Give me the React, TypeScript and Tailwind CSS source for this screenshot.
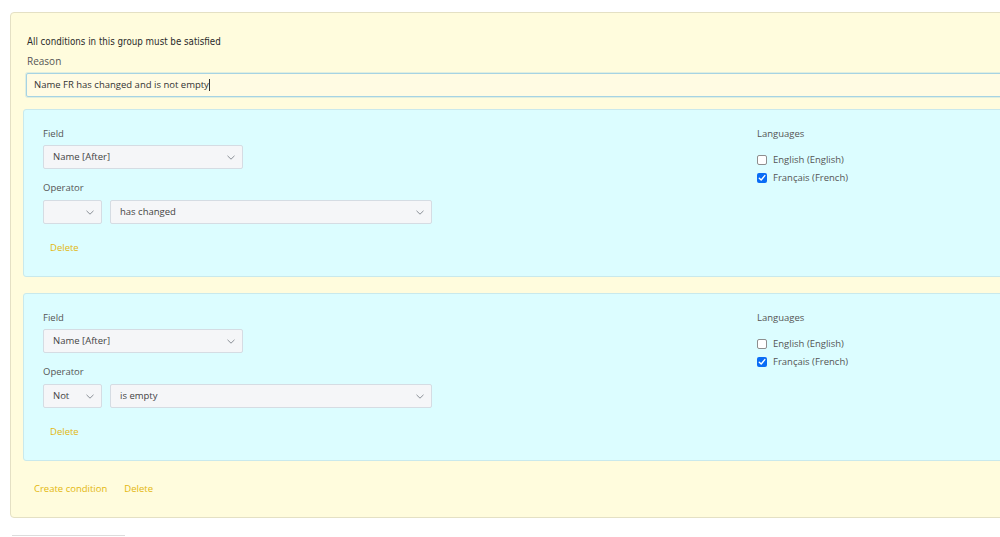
import React from "react";

function Chevron() {
  return (
    <svg width="8" height="5" viewBox="0 0 8 5" className="shrink-0">
      <path d="M0.5 0.8 L4 4.2 L7.5 0.8" fill="none" stroke="#8a8f96" strokeWidth="1" />
    </svg>
  );
}

function Select({ value, w }: { value: string; w: string }) {
  return (
    <div
      className={`${w} h-[24px] flex items-center justify-between pl-[9px] pr-[7px] bg-[#f5f6f8] border border-[#d5dce3] rounded-[2px] text-[9.5px] text-[#444]`}
    >
      <span className="leading-none">{value}</span>
      <Chevron />
    </div>
  );
}

function Checkbox({ checked }: { checked: boolean }) {
  if (checked) {
    return (
      <div className="w-[10px] h-[10px] rounded-[2px] bg-[#0a6cf5] flex items-center justify-center">
        <svg width="8" height="8" viewBox="0 0 8 8">
          <path d="M1.3 4.2 L3.2 6 L6.8 1.6" fill="none" stroke="white" strokeWidth="1.4" strokeLinecap="round" strokeLinejoin="round" />
        </svg>
      </div>
    );
  }
  return <div className="w-[10px] h-[10px] rounded-[2px] bg-white border border-[#8e8e8e]" />;
}

function Condition({ op }: { op: string }) {
  return (
    <div className="w-[1000px] border border-[#c9e9ec] rounded-[3px] bg-[#dcfdff] pl-[19px] pt-[17px] pb-[21px] flex">
      <div className="w-[714px]">
        <div className="leading-[14px]">Field</div>
        <div className="mt-[4px]">
          <Select value="Name [After]" w="w-[200px]" />
        </div>
        <div className="mt-[12px] leading-[14px]">Operator</div>
        <div className="mt-[5px] flex gap-[8px]">
          <Select value={op} w="w-[59px]" />
          <Select value={op ? "is empty" : "has changed"} w="w-[322px]" />
        </div>
        <div className="mt-[17px] ml-[7px] leading-[14px] text-[#e3b70e]">Delete</div>
      </div>
      <div>
        <div className="leading-[14px]">Languages</div>
        <div className="mt-[12px] flex items-center gap-[6px] h-[14px]">
          <Checkbox checked={false} />
          <span>English (English)</span>
        </div>
        <div className="mt-[4px] flex items-center gap-[6px] h-[14px]">
          <Checkbox checked={true} />
          <span>Français (French)</span>
        </div>
      </div>
    </div>
  );
}

export default function App() {
  return (
    <div className="w-[1000px] h-[537px] overflow-hidden bg-white font-['Open_Sans',sans-serif] text-[9.5px] text-[#555]">
      <div className="ml-[10px] mt-[12px] w-[1020px] h-[506px] rounded-[4px] border border-[#e4e0c4] bg-[#fffcdd] pl-[12px] pt-[22px]">
        <div className="ml-[4px] leading-[14px] text-[9.7px] font-medium text-[#2a2a2a] font-['DejaVu_Sans',sans-serif] [font-stretch:condensed]">
          All conditions in this group must be satisfied
        </div>
        <div className="ml-[4px] mt-[5px] leading-[14px] text-[10px]">Reason</div>
        <div className="ml-[3px] mt-[5px] h-[24px] w-[1000px] border border-[#a6d3e3] rounded-[2px] bg-[#fffbe3] shadow-[0_0_0_1px_rgba(166,211,227,0.35)] flex items-center pl-[7px] text-[9.5px] text-[#333]">
          <span>Name FR has changed and is not empty</span>
          <span className="w-px h-[12px] bg-[#333]" />
        </div>
        <div className="mt-[12px]">
          <Condition op="" />
        </div>
        <div className="mt-[16px]">
          <Condition op="Not" />
        </div>
        <div className="mt-[21px] ml-[11px] flex gap-[17px] leading-[14px] text-[#e3b70e]">
          <span>Create condition</span>
          <span>Delete</span>
        </div>
      </div>
      <div className="ml-[12px] mt-[17px] w-[113px] h-[10px] border-t border-[#dcdcdc]" />
    </div>
  );
}
